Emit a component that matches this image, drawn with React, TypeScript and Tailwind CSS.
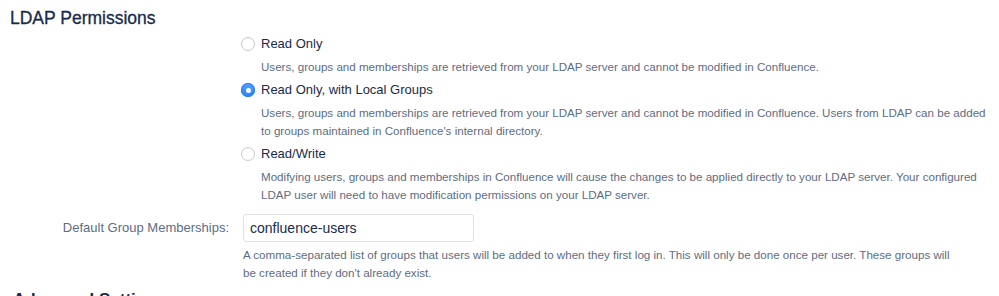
import { useState } from "react";

const options = [
  {
    id: "read-only",
    label: "Read Only",
    description:
      "Users, groups and memberships are retrieved from your LDAP server and cannot be modified in Confluence.",
  },
  {
    id: "read-only-local",
    label: "Read Only, with Local Groups",
    description:
      "Users, groups and memberships are retrieved from your LDAP server and cannot be modified in Confluence. Users from LDAP can be added to groups maintained in Confluence's internal directory.",
  },
  {
    id: "read-write",
    label: "Read/Write",
    description:
      "Modifying users, groups and memberships in Confluence will cause the changes to be applied directly to your LDAP server. Your configured LDAP user will need to have modification permissions on your LDAP server.",
  },
];

function Radio({ checked }: { checked: boolean }) {
  if (checked) {
    return (
      <span className="flex h-[14px] w-[14px] shrink-0 items-center justify-center rounded-full bg-gradient-to-b from-[#4fa3fd] to-[#2a82f8] shadow-[inset_0_0_0_1px_#2a7ff0]">
        <span className="h-[5px] w-[5px] rounded-full bg-white" />
      </span>
    );
  }
  return (
    <span className="h-[14px] w-[14px] shrink-0 rounded-full border border-[#c9c9c9] bg-white shadow-[inset_0_1px_1px_rgba(0,0,0,0.04)]" />
  );
}

export default function App() {
  const [mode, setMode] = useState("read-only-local");

  return (
    <div className="h-[296px] w-[999px] overflow-hidden bg-white font-['Liberation_Sans',Arial,sans-serif] text-[#172b4d]">
      {/* Header */}
      <h2 className="pl-[10px] pt-[6px] text-[17.5px] leading-[24px] [-webkit-text-stroke:0.3px_#172b4d]">
        LDAP Permissions
      </h2>

      {/* Permission options */}
      <div className="mt-[3px] flex flex-col gap-[3px] pl-[241px]">
        {options.map((opt) => (
          <div key={opt.id} className="flex flex-col" onClick={() => setMode(opt.id)}>
            <div className="flex h-[22px] items-center gap-[6px]">
              <Radio checked={mode === opt.id} />
              <span className="text-[13px] leading-[22px]">{opt.label}</span>
            </div>
            <p className="mt-[3px] max-w-[750px] pl-[20px] text-[11.6px] leading-[18px] text-[#5e6c84]">
              {opt.description}
            </p>
          </div>
        ))}
      </div>

      {/* Default group memberships */}
      <div className="mt-[10px] flex">
        <label className="w-[229px] shrink-0 pt-[6px] text-right text-[13px] leading-[16px] text-[#5e6c84]">
          Default Group Memberships:
        </label>
        <div className="ml-[14px] flex flex-col">
          <input
            defaultValue="confluence-users"
            className="h-[28px] w-[231px] rounded-[3px] border border-[#dfe1e6] px-[6px] text-[14px] text-[#172b4d] outline-none"
          />
          <p className="mt-[4px] w-[718px] text-[11.6px] leading-[18px] text-[#5e6c84]">
            A comma-separated list of groups that users will be added to when they first log in. This will only be done
            once per user. These groups will be created if they don't already exist.
          </p>
        </div>
      </div>

      {/* Advanced settings */}
      <div className="mt-[7px] flex items-center gap-[4px] pl-[3px] text-[17px] font-bold leading-[22px]">
        <span className="text-[12px]">▸</span>
        <span>Advanced Settings</span>
      </div>
    </div>
  );
}
